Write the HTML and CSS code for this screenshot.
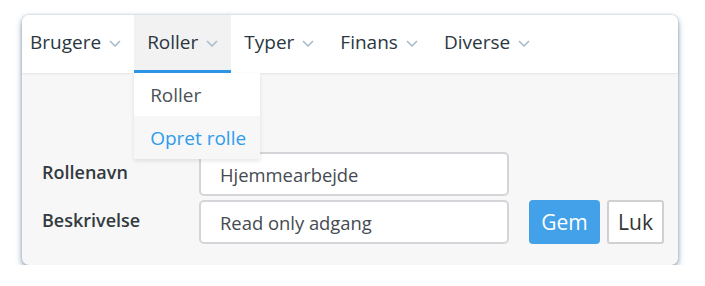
FILE: index.html
```html
<!DOCTYPE html>
<html lang="da">
<head>
<meta charset="utf-8">
<link rel="stylesheet" href="styles.css">
</head>
<body>
<div class="card">
  <nav class="nav">
    <div class="nav-item first">Brugere<svg class="chev" viewBox="0 0 12 7"><path d="M1 1 L6 6 L11 1"/></svg></div>
    <div class="nav-item active">Roller<svg class="chev" viewBox="0 0 12 7"><path d="M1 1 L6 6 L11 1"/></svg>
      <div class="dropdown">
        <div class="dd-item">Roller</div>
        <div class="dd-item hl">Opret rolle</div>
      </div>
    </div>
    <div class="nav-item">Typer<svg class="chev" viewBox="0 0 12 7"><path d="M1 1 L6 6 L11 1"/></svg></div>
    <div class="nav-item">Finans<svg class="chev" viewBox="0 0 12 7"><path d="M1 1 L6 6 L11 1"/></svg></div>
    <div class="nav-item">Diverse<svg class="chev" viewBox="0 0 12 7"><path d="M1 1 L6 6 L11 1"/></svg></div>
  </nav>
  <div class="body">
    <div class="form">
      <label class="label">Rollenavn</label>
      <div class="input">Hjemmearbejde</div>
      <div></div>
      <label class="label">Beskrivelse</label>
      <div class="input">Read only adgang</div>
      <div class="buttons">
        <button class="btn primary">Gem</button>
        <button class="btn plain">Luk</button>
      </div>
    </div>
  </div>
</div>
</body>
</html>
```
FILE: styles.css
```css
* { box-sizing: border-box; }
html, body { margin: 0; padding: 0; background: #fff; }
body {
  font-family: "Open Sans", "Noto Sans", sans-serif;
  color: #2b3640;
  padding: 15px 0 0 22px;
}
.card {
  width: 656px;
  height: 250px;
  background: #f7f7f7;
  border-radius: 7px;
  box-shadow: 0 3px 6px rgba(70, 105, 140, 0.6), 0 0 3px rgba(70,105,140,0.3);
  position: relative;
}
.nav {
  display: flex;
  height: 58px;
  background: #fff;
  border-radius: 7px 7px 0 0;
  box-shadow: 0 1px 2px rgba(0,0,0,0.08);
  position: relative;
  z-index: 2;
}
.nav-item {
  position: relative;
  display: flex;
  align-items: center;
  padding: 0 13px 4px 13px;
  font-size: 19px;
  color: #2b3640;
  height: 58px;
}
.nav-item.first { padding-left: 8px; }
.nav-item.active {
  background: #f2f2f2;
  border-bottom: 3px solid #2b96e6;
  padding-bottom: 1px;
}
.chev {
  width: 12px;
  height: 7px;
  margin-left: 8px;
  fill: none;
  stroke: #a8bccb;
  stroke-width: 1.6;
  margin-top: 2px;
}
.dropdown {
  position: absolute;
  left: 0;
  top: 58px;
  width: 126px;
  background: #fff;
  box-shadow: 0 2px 4px rgba(0,0,0,0.1);
  z-index: 5;
}
.dd-item {
  height: 43px;
  padding-left: 16px;
  display: flex;
  align-items: center;
  font-size: 19px;
  color: #4a5157;
}
.dd-item.hl {
  color: #2f9cec;
  background: #f7f7f7;
}
.body {
  padding: 79px 0 0 20px;
}
.form {
  display: grid;
  grid-template-columns: 157px 310px auto;
  row-gap: 4px;
  align-items: center;
}
.label {
  font-size: 18px;
  font-weight: 600;
  color: #333a40;
  padding-bottom: 4px;
}
.input {
  height: 44px;
  border: 2px solid #d3d5d8;
  border-radius: 5px;
  background: #fff;
  padding-left: 19px;
  display: flex;
  align-items: center;
  font-size: 18.4px;
  color: #444a50;
}
.buttons {
  display: flex;
  gap: 7px;
  margin-left: 20px;
}
.btn {
  font-family: "Open Sans", "Noto Sans", sans-serif;
  font-size: 21px;
  height: 44px;
  border-radius: 4px;
  padding: 0;
  display: flex;
  align-items: center;
  justify-content: center;
}
.btn.primary {
  width: 71px;
  background: #42a1e8;
  color: #fff;
  border: none;
}
.btn.plain {
  width: 57px;
  background: #fff;
  color: #333;
  border: 2px solid #cfd0d2;
  border-radius: 3px;
}
```
